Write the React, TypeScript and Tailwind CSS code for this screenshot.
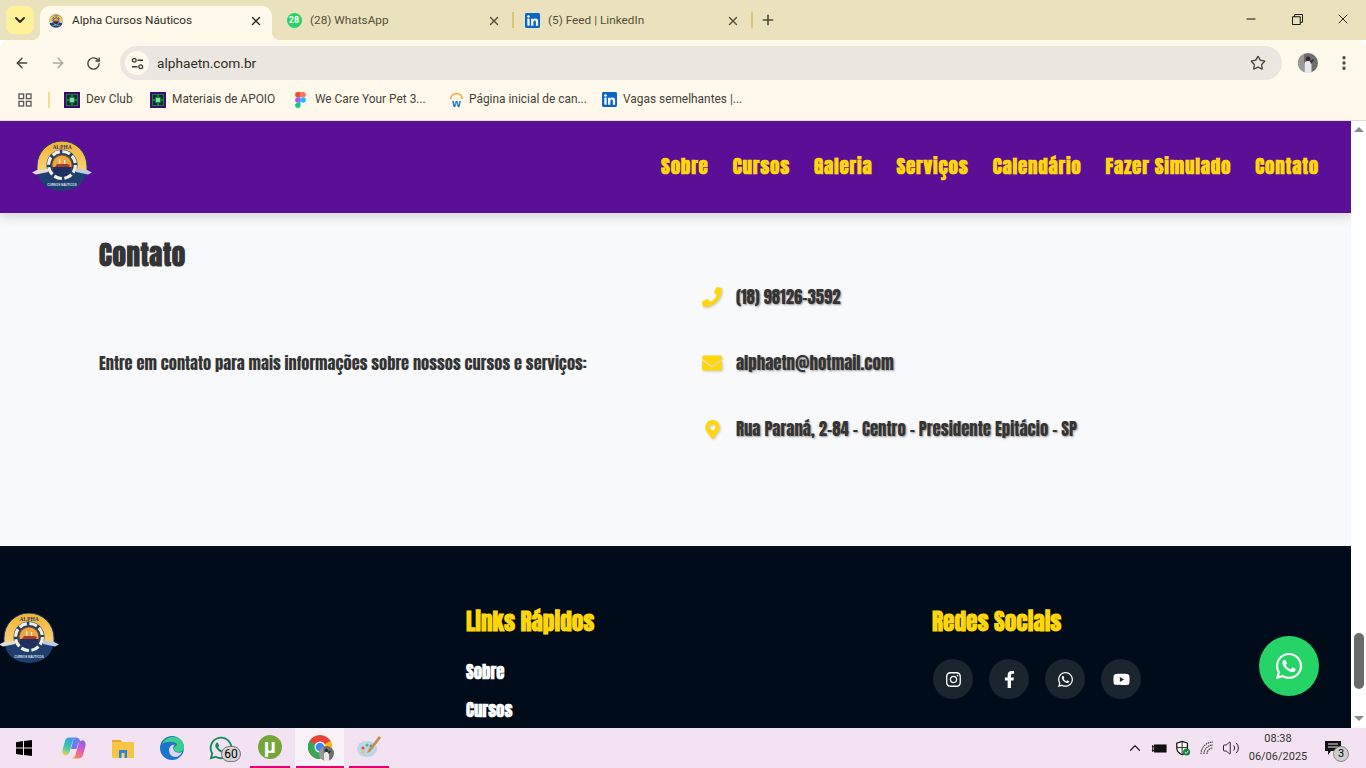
import React from "react";
import { FaPhone, FaEnvelope, FaMapMarkerAlt, FaInstagram, FaFacebookF, FaWhatsapp, FaYoutube } from "react-icons/fa";
import { ArrowLeft, ArrowRight, RotateCw, Star, EllipsisVertical, Plus, X, ChevronDown, ChevronUp, Minus, Volume2 } from "lucide-react";

const antonBold = "font-['Anton','Liberation_Sans_Narrow','Liberation_Sans',sans-serif] font-bold";
const anton = "font-['Anton','Liberation_Sans_Narrow','Liberation_Sans',sans-serif] font-normal";

function Logo({ className }: { className?: string }) {
  return (
    <svg viewBox="0 0 60 50" className={className}>
      <defs>
        <linearGradient id="lg" x1="0" y1="0" x2="0" y2="1"><stop offset="0" stopColor="#f3b12f" /><stop offset="1" stopColor="#fbd27a" /></linearGradient>
      </defs>
      <path d="M5 31 V25 A25 25 0 0 1 55 25 V31 Z" fill="url(#lg)" stroke="#1e3f70" strokeWidth="1" />
      <path d="M6 31 H54 A24 19 0 0 1 6 31 Z" fill="#1e3f70" />
      <circle cx="30" cy="24" r="15.5" fill="#21406b" />
      <circle cx="30" cy="24" r="13.5" fill="none" stroke="#f5efe0" strokeWidth="3.2" strokeDasharray="8 2.6" />
      <circle cx="30" cy="24" r="10.5" fill="#8a4a22" />
      <circle cx="30" cy="24" r="9.5" fill="#eba63f" />
      <path d="M20.5 26 H39.5 A9.5 9.5 0 0 1 20.5 26 Z" fill="#1c2f5e" />
      <path d="M23 26 L25 23 H35 L38 24 L37 26 Z" fill="#a8392c" />
      <rect x="27" y="18" width="1.2" height="5" fill="#f5efe0" />
      <rect x="32" y="19" width="1.2" height="4" fill="#f5efe0" />
      <path d="M0 31.5 L5 29 L16 28 L16 31 L4 33.5 Z" fill="#e3dcd2" />
      <path d="M60 31.5 L55 29 L44 27.5 L44 31 L56 33.5 Z" fill="#bccde6" />
      <text x="30" y="8" textAnchor="middle" fontSize="5.5" fontWeight="700" fontFamily="Liberation Serif, serif" fill="#1e3f70">ALPHA</text>
      <text x="30" y="44.5" textAnchor="middle" fontSize="3" fontWeight="700" fontFamily="Liberation Sans, sans-serif" fill="#dfe4ea">CURSOS NÁUTICOS</text>
    </svg>
  );
}

function DevClub() {
  return (
    <svg viewBox="0 0 16 16" className="w-4 h-4 shrink-0">
      <rect width="16" height="16" fill="#3a0f6e" />
      <rect x="2" y="2" width="12" height="12" fill="#1d7a4a" />
      <path d="M3 3h4v2H5v2H3zM9 3h4v4h-2V5H9zM3 9h2v2h2v2H3zM9 9h4v4H9v-2h2V9z" fill="#0c2a2a" />
      <rect x="6" y="6" width="4" height="4" fill="#7ee0a0" />
    </svg>
  );
}

function Figma() {
  return (
    <svg viewBox="0 0 12 18" className="w-[11px] h-4 shrink-0 mr-[3px]">
      <path d="M3 0h3v6H3a3 3 0 0 1 0-6z" fill="#f24e1e" />
      <path d="M6 0h3a3 3 0 0 1 0 6H6z" fill="#ff7262" />
      <path d="M3 6h3v6H3a3 3 0 0 1 0-6z" fill="#a259ff" />
      <circle cx="9" cy="9" r="3" fill="#1abcfe" />
      <path d="M3 12h3v3a3 3 0 1 1-3-3z" fill="#0acf83" />
    </svg>
  );
}

function Workday() {
  return (
    <svg viewBox="0 0 16 16" className="w-[15px] h-4 shrink-0 -mr-[1px]">
      <path d="M2 7a6 6 0 0 1 12 0" fill="none" stroke="#f5a623" strokeWidth="1.6" />
      <text x="8" y="15.5" textAnchor="middle" fontSize="12" fontWeight="700" fontFamily="Liberation Sans, sans-serif" fill="#0875c9">w</text>
    </svg>
  );
}

function LinkedIn() {
  return (
    <svg viewBox="0 0 16 16" className="w-[15px] h-[15px] shrink-0">
      <rect width="16" height="16" rx="1.5" fill="#0a66c2" />
      <rect x="2.5" y="6" width="2.4" height="7.5" fill="#fff" />
      <circle cx="3.7" cy="3.7" r="1.4" fill="#fff" />
      <path d="M6.5 6h2.3v1.1c.5-.8 1.3-1.3 2.4-1.3 2 0 2.8 1.2 2.8 3.3v4.4h-2.4V9.6c0-1-.3-1.6-1.2-1.6s-1.5.7-1.5 1.7v3.8H6.5z" fill="#fff" />
    </svg>
  );
}

function Avatar({ className }: { className?: string }) {
  return (
    <svg viewBox="0 0 20 20" className={className}>
      <circle cx="10" cy="10" r="10" fill="#6e6e6e" />
      <path d="M0 10a10 10 0 0 1 6-9v18a10 10 0 0 1-6-9z" fill="#9a9a9a" />
      <circle cx="10" cy="6" r="2.4" fill="#2e2e2e" />
      <path d="M6.5 20V11c0-2 1.5-3 3.5-3s3.5 1 3.5 3v9z" fill="#e8e8e8" />
      <path d="M12 8l3-2 1 1-3 4z" fill="#333" />
    </svg>
  );
}

function Tab({ icon, title, active, width, pad }: { icon: React.ReactNode; title: string; active?: boolean; width: string; pad: string }) {
  return (
    <div className={`${width} ${pad} h-[34px] pb-[5px] flex items-center shrink-0 relative ${active ? "bg-[#fff9ec] rounded-t-[10px] text-[#2e2b22]" : "text-[#555039]"}`}>
      {active && <span className="absolute -left-[8px] bottom-0 w-2 h-2 bg-[radial-gradient(circle_at_0_0,transparent_8px,#fff9ec_8px)]" />}
      {active && <span className="absolute -right-[8px] bottom-0 w-2 h-2 bg-[radial-gradient(circle_at_100%_0,transparent_8px,#fff9ec_8px)]" />}
      <span className="w-4 h-4 flex items-center justify-center shrink-0 mr-[8px]">{icon}</span>
      <span className="text-[11.8px] flex-1 truncate">{title}</span>
      <X className={`w-[14px] h-[14px] shrink-0 ${active ? "mr-[9px]" : "mr-[11px]"}`} strokeWidth={2.4} />
    </div>
  );
}

function Bookmark({ icon, label, width }: { icon: React.ReactNode; label: string; width: string }) {
  return (
    <div className={`flex items-center gap-[6px] text-[11.9px] text-[#45413a] shrink-0 ${width}`}>
      {icon}
      <span className="whitespace-nowrap">{label}</span>
    </div>
  );
}

function ContactRow({ icon, text }: { icon: React.ReactNode; text: string }) {
  return (
    <div className="h-[66px] flex items-center">
      <span className="w-[20px] h-5 flex items-center justify-center text-[#ffd60a] mr-[14px] [filter:drop-shadow(1px_1px_1px_rgba(0,0,0,0.2))]">{icon}</span>
      <span className={`${anton} mt-[2px] text-[16.8px] text-[#343434] [text-shadow:1px_1px_2px_rgba(0,0,0,0.4)]`}>{text}</span>
    </div>
  );
}

function Social({ children }: { children: React.ReactNode }) {
  return <div className="w-10 h-10 rounded-full bg-[#1b2530] flex items-center justify-center text-white text-[17px]">{children}</div>;
}

const nav = ["Sobre", "Cursos", "Galeria", "Serviços", "Calendário", "Fazer Simulado", "Contato"];

export default function App() {
  return (
    <div className="w-[1366px] h-[768px] overflow-hidden flex flex-col font-['Roboto','Noto_Sans',sans-serif] bg-white">
      {/* tab strip */}
      <div className="h-[40px] bg-[#e9e2bc] flex items-end shrink-0 pl-[6px]">
        <div className="w-7 h-7 mb-[6px] bg-[#fdf29a] rounded-lg flex items-center justify-center mr-[6px] shrink-0">
          <ChevronDown className="w-4 h-4 text-[#2e2b22]" strokeWidth={3} />
        </div>
        <Tab width="w-[232px]" pad="pl-[8px]" active title="Alpha Cursos Náuticos" icon={<Logo className="w-4 h-4" />} />
        <Tab width="w-[240px]" pad="pl-[14px]" title="(28) WhatsApp" icon={
          <span className="w-[15px] h-[15px] rounded-full bg-[#25d366] text-white text-[9px] font-bold flex items-center justify-center">28</span>
        } />
        <div className="w-[2px] h-4 bg-[#d8c970] mb-[12px] shrink-0" />
        <Tab width="w-[237px]" pad="pl-[10px]" title="(5) Feed | LinkedIn" icon={<LinkedIn />} />
        <div className="w-[2px] h-4 bg-[#d8c970] mb-[12px] shrink-0" />
        <Plus className="w-4 h-4 mb-[12px] ml-[7px] text-[#4d4830] shrink-0" strokeWidth={2.4} />
        <div className="flex-1" />
        <div className="flex items-center mb-[13px] shrink-0">
          <Minus className="w-[14px] h-[14px] text-black mr-[34px]" strokeWidth={1.6} />
          <svg viewBox="0 0 12 12" className="w-[11px] h-[11px] mr-[32px]"><path d="M.5 3h8.5v8.5H.5zM3 3V.5h8.5V9H9" fill="none" stroke="#000" /></svg>
          <X className="w-4 h-4 text-black mr-[15px]" strokeWidth={1.2} />
        </div>
      </div>
      {/* toolbar */}
      <div className="h-[81px] bg-[#fff9ec] rounded-t-lg border-b border-[#e2dccb] shrink-0 relative">
        <div className="h-[45px] flex items-center pt-[1px] pl-[14px]">
          <ArrowLeft className="w-4 h-4 text-[#4a463c]" strokeWidth={2.2} />
          <ArrowRight className="w-4 h-4 text-[#aca89c] ml-[20px]" strokeWidth={2.2} />
          <RotateCw className="w-[15px] h-[15px] text-[#4a463c] ml-[20px]" strokeWidth={2.2} />
          <div className="w-[1162px] h-[34px] rounded-[17px] bg-[#ebe7e0] ml-[19px] flex items-center pl-[5px] pr-[16px]">
            <span className="w-6 h-6 rounded-full bg-[#fff9ec] flex items-center justify-center shrink-0">
              <svg viewBox="0 0 14 14" className="w-[13px] h-[13px]" fill="none" stroke="#3a372f" strokeWidth="1.4">
                <circle cx="3.5" cy="3.5" r="2" /><path d="M7 3.5h6M1 10.5h6" /><circle cx="10.5" cy="10.5" r="2" />
              </svg>
            </span>
            <span className="ml-[8px] text-[13.7px] text-[#2e2b22]">alphaetn.com.br</span>
            <span className="flex-1" />
            <Star className="w-4 h-4 text-[#4a463c]" strokeWidth={2} />
          </div>
          <Avatar className="ml-[16px] w-5 h-5 shrink-0" />
          <EllipsisVertical className="w-[18px] h-[18px] ml-[17px] text-[#4a463c]" strokeWidth={2.4} />
        </div>
        <div className="h-[30px] flex items-center pl-[18px]">
          <svg viewBox="0 0 14 14" className="w-[14px] h-[14px] shrink-0" fill="none" stroke="#555" strokeWidth="1.3">
            <rect x="1" y="1" width="4.6" height="4.6" /><rect x="8.4" y="1" width="4.6" height="4.6" /><rect x="1" y="8.4" width="4.6" height="4.6" /><rect x="8.4" y="8.4" width="4.6" height="4.6" />
          </svg>
          <span className="w-[2px] h-4 bg-[#f0e08a] ml-[16px] mr-[14px] shrink-0" />
          <Bookmark width="w-[86px]" icon={<DevClub />} label="Dev Club" />
          <Bookmark width="w-[145px]" icon={<DevClub />} label="Materiais de APOIO" />
          <Bookmark width="w-[154px]" icon={<Figma />} label="We Care Your Pet 3..." />
          <Bookmark width="w-[153px]" icon={<Workday />} label="Página inicial de can..." />
          <Bookmark width="w-[160px]" icon={<LinkedIn />} label="Vagas semelhantes |..." />
        </div>
      </div>

      {/* page */}
      <div className="h-[607px] flex shrink-0 overflow-hidden relative">
        <div className="w-[1351px] h-[607px] overflow-hidden flex flex-col shrink-0">
          <header className="h-[92px] bg-[#5b0f96] flex items-center justify-between pl-[32px] pr-[32px] shrink-0 relative z-10 shadow-[0_4px_10px_rgba(0,0,0,0.15)]">
            <Logo className="w-[60px] h-[50px] mt-[-2px]" />
            <nav className={`flex gap-[24px] mt-[-2px] ${antonBold} text-[19px] text-[#ffd60a] tracking-[0.8px]`}>
              {nav.map((n) => <span key={n}>{n}</span>)}
            </nav>
          </header>
          <section className="h-[333px] bg-[#f8f9fb] flex pl-[99px] shrink-0">
            <div className="w-[603px] pt-[22px]">
              <h2 className={`${antonBold} text-[27px] leading-[40px] text-[#343434] tracking-[0.6px]`}>Contato</h2>
              <p className={`${anton} text-[16.4px] leading-[26px] text-[#343434] mt-[75px]`}>Entre em contato para mais informações sobre nossos cursos e serviços:</p>
            </div>
            <div className="pt-[51px]">
              <ContactRow icon={<FaPhone className="text-[20px]" />} text="(18) 98126-3592" />
              <ContactRow icon={<FaEnvelope className="text-[20px]" />} text="alphaetn@hotmail.com" />
              <ContactRow icon={<FaMapMarkerAlt className="text-[19px]" />} text="Rua Paraná, 2-84 - Centro - Presidente Epitácio - SP" />
            </div>
          </section>
          <footer className="flex-1 bg-[#000c1a] grid grid-cols-3 gap-x-[47px] pt-[60px]">
            <div className="pt-[7px]">
              <Logo className="w-[60px] h-[50px] -ml-px" />
            </div>
            <div>
              <h3 className={`${antonBold} text-[23.3px] leading-[30px] mt-[1px] text-[#ffd60a]`}>Links Rápidos</h3>
              <div className={`${antonBold} text-[16.8px] text-white flex flex-col gap-[12px] mt-[22px]`}>
                <span className="leading-[26px]">Sobre</span>
                <span className="leading-[26px]">Cursos</span>
              </div>
            </div>
            <div>
              <h3 className={`${antonBold} text-[23.3px] leading-[30px] mt-[1px] text-[#ffd60a]`}>Redes Sociais</h3>
              <div className="flex gap-4 mt-[22px] ml-[1px]">
                <Social><FaInstagram /></Social>
                <Social><FaFacebookF /></Social>
                <Social><FaWhatsapp /></Social>
                <Social><FaYoutube /></Social>
              </div>
            </div>
          </footer>
        </div>
        {/* scrollbar */}
        <div className="w-[15px] bg-white flex flex-col items-center justify-between pt-[6px] pb-[7px] relative shrink-0">
          <svg viewBox="0 0 10 5" className="w-[10px] h-[5px]"><path d="M5 0l5 5H0z" fill="#8a8a8a" /></svg>
          <svg viewBox="0 0 10 5" className="w-[10px] h-[5px]"><path d="M0 0h10L5 5z" fill="#8a8a8a" /></svg>
          <div className="absolute left-[3px] top-[512px] w-[10px] h-[56px] rounded-full bg-[#6b6b6b]" />
        </div>
        {/* floating whatsapp */}
        <div className="absolute left-[1259px] top-[515px] w-[60px] h-[60px] rounded-full bg-[#25d366] flex items-center justify-center text-white text-[30px]">
          <FaWhatsapp />
        </div>
      </div>

      {/* taskbar */}
      <div className="h-[40px] bg-[#f3e2f1] flex items-stretch shrink-0">
        <div className="w-[48px] flex items-center justify-center">
          <svg viewBox="0 0 16 16" className="w-4 h-4"><path d="M0 2.2 7 1v6.4H0zM8 .9 16 0v7.4H8zM0 8.5h7v6.4l-7-1zM8 8.5h8V16l-8-1.1z" fill="#000" /></svg>
        </div>
        <div className="w-[51px] flex items-center justify-center">
          <svg viewBox="0 0 24 24" className="w-6 h-6">
            <defs>
              <linearGradient id="cpa" x1="0.6" y1="0" x2="0.3" y2="1"><stop offset="0" stopColor="#2f9ff0" /><stop offset=".6" stopColor="#3fc9a8" /><stop offset="1" stopColor="#e8d84c" /></linearGradient>
              <linearGradient id="cpb" x1="0.7" y1="0" x2="0.3" y2="1"><stop offset="0" stopColor="#8a5cf0" /><stop offset=".55" stopColor="#e85cb0" /><stop offset="1" stopColor="#f59050" /></linearGradient>
            </defs>
            <path d="M7 1.5h7c-2 .5-3 2-3.5 4L7.5 16c-.6 2-2 3.5-4 3.5C1 19.5 0 17 .5 14L3 5c.6-2 2-3.5 4-3.5z" fill="url(#cpa)" />
            <path d="M17 22.5h-7c2-.5 3-2 3.5-4L16.5 8c.6-2 2-3.5 4-3.5 2.5 0 3.5 2.5 3 5.5L21 19c-.6 2-2 3.5-4 3.5z" fill="url(#cpb)" />
            <path d="M14 1.5c2 0 3.5 1 4 3l1 2c-1.5-.6-2.5 0-3 1.5l-1.5 5H9l2-8c.5-2 1.5-3.5 3-3.500z" fill="#6a7cf0" />
          </svg>
        </div>
        <div className="w-[48px] flex items-center justify-center">
          <svg viewBox="0 0 22 20" className="w-[22px] h-5"><path d="M0 2h8l2 2h12v16H0z" fill="#f6c544" /><path d="M0 2h8l2 2H0z" fill="#e6a72c" /><rect x="7" y="12" width="8" height="8" fill="#2b86d9" /><rect x="9.5" y="15" width="3" height="5" fill="#f6d978" /></svg>
        </div>
        <div className="w-[50px] flex items-center justify-center">
          <svg viewBox="0 0 24 24" className="w-6 h-6">
            <circle cx="12" cy="12" r="12" fill="#1b74c8" />
            <path d="M2 8C5 1 14-1 20 3c3 2 4 6 4 9 0 3-3 4-6 4-2 0-4-1-4-3 0-3 3-3 3-5-3-3-11-3-15 0z" fill="#3ccf8e" />
            <path d="M9 14c0-3 3-6 6-5-3 1-2 6 1 7 2 1 4 1 6 0-2 5-7 6-10 4-2-1-3-4-3-6z" fill="#f3e2f1" opacity=".9" />
          </svg>
        </div>
        <div className="w-[48px] flex items-center justify-center relative">
          <FaWhatsapp className="text-[#128c5a] text-[26px]" />
          <span className="absolute left-[24px] top-[18px] w-[20px] h-[16px] rounded-full bg-[#d4d4d4] border border-[#777] text-[12px] leading-[14px] text-center text-black">60</span>
        </div>
        <div className="w-[48px] flex flex-col items-center justify-between ml-[1px]">
          <span className="mt-[7px] w-6 h-6 rounded-full bg-[#76a63a] text-white font-bold text-[20px] leading-[22px] text-center">µ</span>
          <span className="w-[40px] h-[2px] bg-[#e6006e]" />
        </div>
        <div className="w-[49px] ml-[1px] bg-[#faf2f9] flex flex-col items-center justify-between">
          <div className="relative mt-[7px] w-6 h-6">
            <svg viewBox="0 0 24 24" className="w-6 h-6">
              <circle cx="12" cy="12" r="12" fill="#ea4335" />
              <path d="M12 12 22.4 6A12 12 0 0 1 12 24z" fill="#fbbc05" />
              <path d="M12 12 12 24A12 12 0 0 1 1.6 6z" fill="#34a853" />
              <circle cx="12" cy="12" r="5.5" fill="#fff" /><circle cx="12" cy="12" r="4.3" fill="#4285f4" />
            </svg>
            <Avatar className="absolute left-[11px] top-[11px] w-[15px] h-[15px]" />
          </div>
          <span className="w-[48px] h-[2px] bg-[#e6006e]" />
        </div>
        <div className="w-[40px] ml-[5px] flex flex-col items-center justify-between">
          <svg viewBox="0 0 24 24" className="w-6 h-6 mt-[7px]">
            <ellipse cx="10" cy="14" rx="10" ry="8" fill="#bcd6ea" />
            <circle cx="6" cy="13" r="1.6" fill="#e94c4c" /><circle cx="10" cy="10" r="1.6" fill="#4cc26a" /><circle cx="14" cy="11" r="1.6" fill="#4a90e2" /><circle cx="6" cy="17" r="1.6" fill="#f0c040" />
            <path d="M22 1 L24 3 L13 17 L10 18 L11 15 Z" fill="#c98f4a" />
          </svg>
          <span className="w-[40px] h-[2px] bg-[#e6006e]" />
        </div>
        <div className="flex-1" />
        <div className="flex items-center text-[#222] shrink-0">
          <ChevronUp className="w-[18px] h-[18px] mr-[7px]" strokeWidth={1.6} />
          <svg viewBox="0 0 18 12" className="w-[16px] h-[11px] mr-[8px]"><rect x="4" y="2" width="13" height="8" fill="#111" stroke="#111" /><path d="M1 4h3M1 8h3M2 2v8" stroke="#111" strokeWidth="1.2" /></svg>
          <svg viewBox="0 0 18 18" className="w-[16px] h-[17px] mr-[9px]">
            <path d="M8 1l6 2v5c0 4-3 7-6 8-3-1-6-4-6-8V3z" fill="#fff" stroke="#111" strokeWidth="1.4" /><path d="M8 1v15M2 8h12" stroke="#111" />
            <circle cx="13" cy="13" r="4" fill="#12873c" /><path d="M11 13l1.5 1.5 2.5-3" stroke="#fff" fill="none" />
          </svg>
          <svg viewBox="0 0 14 14" className="w-[14px] h-[14px] mr-[8px]" fill="none" stroke="#444" strokeWidth="1.1"><path d="M1 13A12 12 0 0 1 13 1M4 13a9 9 0 0 1 9-9M7 13a6 6 0 0 1 6-6" strokeDasharray="1.6 .6" /></svg>
          <Volume2 className="w-[18px] h-[18px] mr-[8px]" strokeWidth={1.3} />
          <div className="w-[60px] text-center text-[11px] leading-[18px] text-[#333]">
            <div>08:38</div>
            <div className="whitespace-nowrap">06/06/2025</div>
          </div>
          <div className="relative ml-[17px] mr-[25px] w-[16px] h-[14px]">
            <svg viewBox="0 0 16 14" className="w-[16px] h-[14px]"><path d="M0 0h16v10H6l-3 4v-4H0z" fill="#111" /><path d="M3 3h10M3 6h10" stroke="#f3e2f1" /></svg>
            <span className="absolute left-[8px] top-[5px] w-[16px] h-[16px] rounded-full bg-[#cfcfcf] border border-[#888] text-[11px] leading-[14px] text-center text-black">3</span>
          </div>
        </div>
      </div>
    </div>
  );
}
